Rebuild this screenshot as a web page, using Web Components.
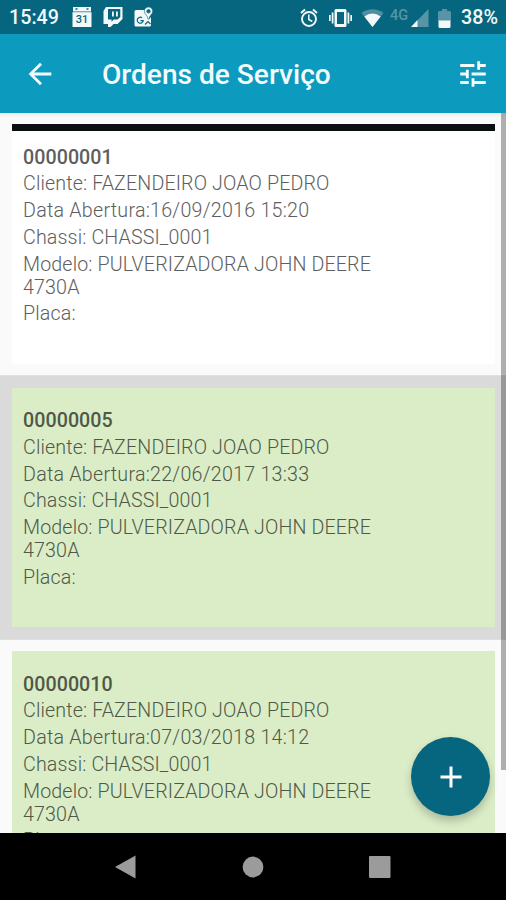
<!DOCTYPE html>
<html lang="pt-BR">
<head>
<meta charset="utf-8">
<title>Ordens de Serviço</title>
<style>
  body {
    margin: 0;
    font-family: Roboto, "Liberation Sans", sans-serif;
  }
</style>
</head>
<body>
<phone-screen>
  <status-bar slot="top" time="15:49" battery="38%"></status-bar>
  <app-bar slot="top">Ordens de Serviço</app-bar>
  <order-item first number="00000001" cliente="FAZENDEIRO JOAO PEDRO" data="16/09/2016 15:20" chassi="CHASSI_0001" modelo="PULVERIZADORA JOHN DEERE 4730A"></order-item>
  <order-item selected done number="00000005" cliente="FAZENDEIRO JOAO PEDRO" data="22/06/2017 13:33" chassi="CHASSI_0001" modelo="PULVERIZADORA JOHN DEERE 4730A"></order-item>
  <order-item done number="00000010" cliente="FAZENDEIRO JOAO PEDRO" data="07/03/2018 14:12" chassi="CHASSI_0001" modelo="PULVERIZADORA JOHN DEERE 4730A"></order-item>
  <add-button slot="float"></add-button>
  <nav-bar slot="bottom"></nav-bar>
</phone-screen>

<script>
class PhoneScreen extends HTMLElement {
  constructor() {
    super();
    this.attachShadow({ mode: "open" });

    this.shadowRoot.innerHTML = `
      <style>
        :host {
          display: flex;
          flex-direction: column;
          width: 506px;
          height: 900px;
          overflow: hidden;
          background: #fafafa;
        }
        main {
          position: relative;
          flex: 1;
          min-height: 0;
          overflow: hidden;
        }
        .list {
          margin-top: -1px;
        }
        .thumb {
          position: absolute;
          top: 0;
          right: 0;
          width: 5px;
          height: 657px;
          background: rgba(0, 0, 0, 0.3);
        }
        .shade {
          position: absolute;
          top: 0;
          left: 0;
          right: 0;
          height: 5px;
          background: linear-gradient(rgba(0, 0, 0, 0.05), rgba(0, 0, 0, 0));
        }
      </style>

      <slot name="top"></slot>
      <main>
        <div class="list"><slot></slot></div>
        <div class="shade"></div>
        <div class="thumb"></div>
        <slot name="float"></slot>
      </main>
      <slot name="bottom"></slot>
    `;
  }
}

class StatusBar extends HTMLElement {
  constructor() {
    super();
    this.attachShadow({ mode: "open" });

    this.shadowRoot.innerHTML = `
      <style>
        :host {
          display: flex;
          align-items: center;
          justify-content: space-between;
          box-sizing: border-box;
          flex: none;
          height: 34px;
          padding: 2px 8px 0 9px;
          background: #07667f;
          color: #f3f9fa;
          font-size: 19.7px;
          font-weight: 500;
          line-height: 32px;
        }
        div {
          display: flex;
          align-items: center;
        }
        svg {
          display: block;
          fill: #f3f9fa;
        }
        .left svg {
          margin-bottom: 2px;
        }
        .left { gap: 11px; }
        .left svg:first-of-type { margin-left: 2px; }
        .net {
          align-self: flex-start;
          margin: 0 3px 0 6px;
          color: #5795a6;
          font-size: 14.5px;
          line-height: 27px;
        }
      </style>

      <div class="left">
        <span id="time"></span>
        <svg width="20" height="20" viewBox="0 0 20 20">
          <path fill-rule="evenodd" d="M1 0h18v4.400H1zM3.500 1.300v1.500h2V1.300zM14.500 1.300v1.500h2V1.300z"/>
          <path d="M.5 5.200h19V20H.5z"/>
          <text x="10" y="16.200" text-anchor="middle" font-size="11" font-weight="500" fill="#07667f">31</text>
        </svg>
        <svg width="20" height="20" viewBox="0 0 20 20">
          <path fill-rule="evenodd" d="M3 0h16.500v12l-5 5h-4l-3 3H5v-3H.5V4zM5 2v10.500h3.500v2.300l2.300-2.300h3.700l2.800-2.500V2z"/>
          <path d="M9 4.500h1.800v5H9zM13 4.500h1.800v5H13z"/>
        </svg>
        <svg width="19" height="20" viewBox="0 0 19 20">
          <path d="M2 3h9c0 3 1.500 5 3.500 8l1 1 1.500-2V18q0 1.500-1.500 1.500H2Q.5 19.500.5 18V4.500Q.5 3 2 3z"/>
          <path fill-rule="evenodd" d="M14.500 0a4.200 4.200 0 0 1 4.200 4.200c0 3-3.300 4-3.700 8h-1c-.4-4-3.700-5-3.700-8A4.200 4.200 0 0 1 14.500 0zm0 2.500a1.800 1.800 0 1 0 0 3.600 1.800 1.800 0 0 0 0-3.600z" stroke="#07667f" stroke-width=".6"/>
          <path d="M8 10.800a3 3 0 1 0 1.200 2.900H6.500M11 17.500l3-3 2.500 2.500" fill="none" stroke="#07667f" stroke-width="1.200"/>
        </svg>
      </div>
      <div class="right">
        <svg width="18" height="20" viewBox="0 0 18 20">
          <g fill="none" stroke="#f3f9fa" stroke-width="1.900">
            <circle cx="9" cy="11" r="7"/>
            <path d="M1 5l4-3.500M17 5l-4-3.500"/>
            <path d="M8.800 6.500v5l3.500 2" stroke-width="1.500"/>
          </g>
        </svg>
        <svg style="margin-left:11px" width="23" height="20" viewBox="0 0 23 20">
          <path fill-rule="evenodd" d="M7 1h9q1.500 0 1.500 1.500v15Q17.500 19 16 19H7q-1.500 0-1.500-1.500v-15Q5.500 1 7 1zM8 4v12h7V4z"/>
          <path d="M2.700 4.500h1.800v11H2.700zM18.500 4.500h1.800v11h-1.800zM0 7h1.700v6H0zM21.300 7H23v6h-1.700z"/>
        </svg>
        <svg style="margin-left:9px" width="23" height="18" viewBox="0 0 23 18">
          <path d="M11.500 18L.5 4Q11.500-3.500 22.500 4z" fill="#4f8fa1"/>
          <path d="M11.500 18L3.300 7.500Q11.500 1.500 19.700 7.500z"/>
        </svg>
        <span class="net">4G</span>
        <svg width="18" height="18" viewBox="0 0 18 18">
          <path d="M17.500 0v18H0z" fill="#5795a6"/>
          <path d="M6.500 11v7H0z"/>
        </svg>
        <svg style="margin-left:9px" width="13" height="19" viewBox="0 0 13 19">
          <path d="M4 0h5v2h2.500Q13 2 13 3.500V12H0V3.500Q0 2 1.500 2H4z" fill="#5795a6"/>
          <path d="M.5 11.500h12v6q0 1.500-1.500 1.500H2Q.5 19 .5 17.500z"/>
        </svg>
        <span id="battery" style="margin-left:10px"></span>
      </div>
    `;
  }

  connectedCallback() {
    this.shadowRoot.getElementById("time").textContent = this.getAttribute("time");
    this.shadowRoot.getElementById("battery").textContent = this.getAttribute("battery");
  }
}

class AppBar extends HTMLElement {
  constructor() {
    super();
    this.attachShadow({ mode: "open" });

    this.shadowRoot.innerHTML = `
      <style>
        :host {
          display: flex;
          align-items: center;
          box-sizing: border-box;
          flex: none;
          height: 79px;
          padding: 0 16px 0 23px;
          background: #0c9abf;
          color: #f3fbfd;
        }
        svg {
          fill: #f3fbfd;
        }
        h1 {
          flex: 1;
          margin: 2px 0 0 45px;
          font-size: 28.1px;
          font-weight: 500;
          line-height: 34px;
        }
      </style>

      <svg width="34" height="34" viewBox="0 0 24 24"><path d="M20 11H7.830l5.590-5.590L12 4l-8 8 8 8 1.410-1.410L7.830 13H20v-2z"/></svg>
      <h1><slot></slot></h1>
      <svg width="34" height="34" viewBox="0 0 24 24"><path d="M3 17v2h6v-2H3zM3 5v2h10V5H3zm10 16v-2h8v-2h-8v-2h-2v6h2zM7 9v2H3v2h4v2h2V9H7zm14 4v-2H11v2h10zm-6-4h2V7h4V5h-4V3h-2v6z"/></svg>
    `;
  }
}

class OrderItem extends HTMLElement {
  constructor() {
    super();
    this.attachShadow({ mode: "open" });

    this.shadowRoot.innerHTML = `
      <style>
        :host {
          display: block;
          box-sizing: border-box;
          height: 263.5px;
          padding: 12px 11px 12px 12px;
        }
        :host([selected]) {
          background: #dadada;
          box-shadow: 0 0 0 0.8px #dadada;
        }
        .card {
          display: flex;
          flex-direction: column;
          gap: 3.65px;
          box-sizing: border-box;
          height: 239.5px;
          padding: 21.8px 100px 0 11px;
          background: #fff;
          color: #5e5e5e;
          font-size: 19.67px;
          font-weight: 300;
          letter-spacing: 0.13px;
          line-height: 23.05px;
        }
        :host([done]) .card {
          background: #dbedc7;
          color: #4f5947;
        }
        :host([first]) .card {
          border-top: 7px solid #0c0f0f;
          padding-top: 14.8px;
        }
        b {
          font-weight: 500;
          letter-spacing: 0.05px;
        }
        #data {
          letter-spacing: 0.25px;
        }
      </style>

      <div class="card">
        <b id="number"></b>
        <span id="cliente"></span>
        <span id="data"></span>
        <span id="chassi"></span>
        <span id="modelo"></span>
        <span id="placa"></span>
      </div>
    `;
  }

  connectedCallback() {
    this.setText("number", "");
    this.setText("cliente", "Cliente: ");
    this.setText("data", "Data Abertura:");
    this.setText("chassi", "Chassi: ");
    this.setText("modelo", "Modelo: ");
    this.setText("placa", "Placa: ");
  }

  setText(name, label) {
    this.shadowRoot.getElementById(name).textContent = label + (this.getAttribute(name) || "");
  }
}

class AddButton extends HTMLElement {
  constructor() {
    super();
    this.attachShadow({ mode: "open" });

    // floats over the list
    this.shadowRoot.innerHTML = `
      <style>
        :host {
          position: absolute;
          right: 16px;
          bottom: 17px;
          display: flex;
          align-items: center;
          justify-content: center;
          width: 79px;
          height: 79px;
          border-radius: 50%;
          background: #07667f;
          box-shadow: 0 5px 8px rgba(0, 0, 0, 0.22);
        }
      </style>

      <svg width="36" height="36" viewBox="0 0 24 24"><path fill="#fff" d="M19 13h-6v6h-2v-6H5v-2h6V5h2v6h6v2z"/></svg>
    `;
  }
}

class NavBar extends HTMLElement {
  constructor() {
    super();
    this.attachShadow({ mode: "open" });

    this.shadowRoot.innerHTML = `
      <style>
        :host {
          display: flex;
          align-items: center;
          justify-content: center;
          gap: 105px;
          flex: none;
          height: 67px;
          background: #000;
        }
        svg {
          fill: #9b9b9b;
        }
      </style>

      <svg width="22" height="24" viewBox="0 0 22 24"><path d="M20.500.5v23L0 12z"/></svg>
      <svg width="22" height="22" viewBox="0 0 22 22"><circle cx="11" cy="11" r="10.400"/></svg>
      <svg width="22" height="22" viewBox="0 0 22 22"><rect width="21.500" height="22" rx="1"/></svg>
    `;
  }
}

customElements.define("phone-screen", PhoneScreen);
customElements.define("status-bar", StatusBar);
customElements.define("app-bar", AppBar);
customElements.define("order-item", OrderItem);
customElements.define("add-button", AddButton);
customElements.define("nav-bar", NavBar);
</script>
</body>
</html>
